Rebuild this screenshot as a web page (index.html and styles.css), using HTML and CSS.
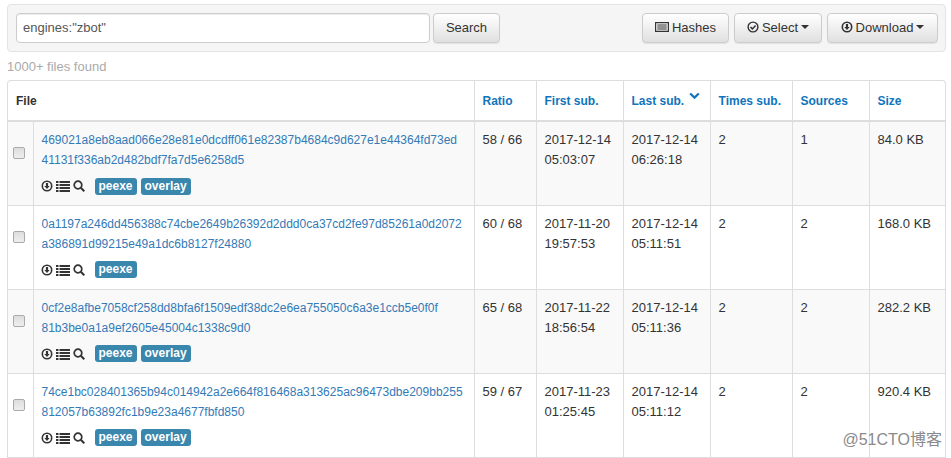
FILE: index.html
```html
<!DOCTYPE html>
<html lang="en">
<head>
<meta charset="utf-8">
<title>Search results</title>
<link rel="stylesheet" href="styles.css">
</head>
<body>
<svg class="defs" width="0" height="0" aria-hidden="true">
  <symbol id="i-down" viewBox="0 0 12 12"><circle cx="6" cy="6" r="4.7" fill="none" stroke="currentColor" stroke-width="1.6"/><path d="M4.9 2.9h2.2v3h1.6L6 9 3.3 5.900h1.600z" fill="currentColor"/></symbol>
  <symbol id="i-list" viewBox="0 0 14 12"><path d="M0 1h2.500v2H0zM3.500 1H14v2H3.500zM0 4h2.500v2H0zM3.500 4H14v2H3.500zM0 7h2.500v2H0zM3.500 7H14v2H3.500zM0 10h2.500v2H0zM3.500 10H14v2H3.500z" fill="currentColor"/></symbol>
  <symbol id="i-search" viewBox="0 0 12 12"><circle cx="5" cy="5" r="3.800" fill="none" stroke="currentColor" stroke-width="1.700"/><path d="M7.800 7.800L11.300 11.300" stroke="currentColor" stroke-width="2" fill="none"/></symbol>
  <symbol id="i-hash" viewBox="0 0 14 12"><path fill-rule="evenodd" d="M0 1h14v10H0zM1.200 2.200v7.600h11.600V2.200z" fill="currentColor"/><path d="M2.300 3.500h9.400v1H2.300zM2.300 5.500h9.400v1H2.300zM2.300 7.500h9.400v1H2.300z" fill="currentColor"/></symbol>
  <symbol id="i-check" viewBox="0 0 12 12"><circle cx="6" cy="6" r="4.900" fill="none" stroke="currentColor" stroke-width="1.400"/><path d="M3.500 6l1.900 1.900 3.200-3.300" fill="none" stroke="currentColor" stroke-width="1.500"/></symbol>
</svg>

<div class="page">
  <div class="well">
    <div class="search">
      <input class="query" type="text" value="engines:&quot;zbot&quot;">
      <button class="btn" type="button">Search</button>
    </div>
    <div class="actions">
      <button class="btn btn-hashes" type="button"><svg class="ico-h"><use href="#i-hash"/></svg>Hashes</button>
      <button class="btn btn-select" type="button"><svg class="ico"><use href="#i-check"/></svg>Select<span class="caret"></span></button>
      <button class="btn btn-download" type="button"><svg class="ico"><use href="#i-down"/></svg>Download<span class="caret"></span></button>
    </div>
  </div>

  <p class="found">1000+ files found</p>

  <div class="table-box">
    <table>
      <colgroup>
        <col class="c-check"><col class="c-hash"><col class="c-ratio"><col class="c-first"><col class="c-last"><col class="c-times"><col class="c-src"><col class="c-size">
      </colgroup>
      <thead>
        <tr>
          <th colspan="2" class="th-file">File</th>
          <th><a href="#">Ratio</a></th>
          <th><a href="#">First sub.</a></th>
          <th><a href="#">Last sub.</a><svg class="chev" viewBox="0 0 12 8"><path d="M1.300 1.300L6 5.800l4.700-4.500" fill="none" stroke="currentColor" stroke-width="2.400"/></svg></th>
          <th><a href="#">Times sub.</a></th>
          <th><a href="#">Sources</a></th>
          <th><a href="#">Size</a></th>
        </tr>
      </thead>
      <tbody>
        <tr class="odd">
          <td class="cell-check"><input class="box" type="checkbox"></td>
          <td class="cell-file">
            <a class="hash" href="#">469021a8eb8aad066e28e81e0dcdff061e82387b4684c9d627e1e44364fd73ed<br>41131f336ab2d482bdf7fa7d5e6258d5</a>
            <div class="tools"><svg class="t-down"><use href="#i-down"/></svg><svg class="t-list"><use href="#i-list"/></svg><svg class="t-search"><use href="#i-search"/></svg><span class="label">peexe</span><span class="label">overlay</span></div>
          </td>
          <td>58 / 66</td>
          <td>2017-12-14<br>05:03:07</td>
          <td>2017-12-14<br>06:26:18</td>
          <td>2</td>
          <td>1</td>
          <td>84.0 KB</td>
        </tr>
        <tr>
          <td class="cell-check"><input class="box" type="checkbox"></td>
          <td class="cell-file">
            <a class="hash" href="#">0a1197a246dd456388c74cbe2649b26392d2ddd0ca37cd2fe97d85261a0d2072<br>a386891d99215e49a1dc6b8127f24880</a>
            <div class="tools"><svg class="t-down"><use href="#i-down"/></svg><svg class="t-list"><use href="#i-list"/></svg><svg class="t-search"><use href="#i-search"/></svg><span class="label">peexe</span></div>
          </td>
          <td>60 / 68</td>
          <td>2017-11-20<br>19:57:53</td>
          <td>2017-12-14<br>05:11:51</td>
          <td>2</td>
          <td>2</td>
          <td>168.0 KB</td>
        </tr>
        <tr class="odd">
          <td class="cell-check"><input class="box" type="checkbox"></td>
          <td class="cell-file">
            <a class="hash" href="#">0cf2e8afbe7058cf258dd8bfa6f1509edf38dc2e6ea755050c6a3e1ccb5e0f0f<br>81b3be0a1a9ef2605e45004c1338c9d0</a>
            <div class="tools"><svg class="t-down"><use href="#i-down"/></svg><svg class="t-list"><use href="#i-list"/></svg><svg class="t-search"><use href="#i-search"/></svg><span class="label">peexe</span><span class="label">overlay</span></div>
          </td>
          <td>65 / 68</td>
          <td>2017-11-22<br>18:56:54</td>
          <td>2017-12-14<br>05:11:36</td>
          <td>2</td>
          <td>2</td>
          <td>282.2 KB</td>
        </tr>
        <tr>
          <td class="cell-check"><input class="box" type="checkbox"></td>
          <td class="cell-file">
            <a class="hash" href="#">74ce1bc028401365b94c014942a2e664f816468a313625ac96473dbe209bb255<br>812057b63892fc1b9e23a4677fbfd850</a>
            <div class="tools"><svg class="t-down"><use href="#i-down"/></svg><svg class="t-list"><use href="#i-list"/></svg><svg class="t-search"><use href="#i-search"/></svg><span class="label">peexe</span><span class="label">overlay</span></div>
          </td>
          <td>59 / 67</td>
          <td>2017-11-23<br>01:25:45</td>
          <td>2017-12-14<br>05:11:12</td>
          <td>2</td>
          <td>2</td>
          <td>920.4 KB</td>
        </tr>
      </tbody>
    </table>
  </div>
</div>
<div class="watermark">@51CTO博客</div>
</body>
</html>
```

FILE: styles.css
```css
* { box-sizing: border-box; }
html, body { margin: 0; padding: 0; height: 458px; overflow: hidden; background: #fff; }
body { font: 13px/20px "Liberation Sans", Arial, sans-serif; color: #333; position: relative; }
.defs { position: absolute; }
a { color: #337ab7; text-decoration: none; }

.page { padding: 4px 5px 0 7px; }

.well {
  height: 48px;
  display: flex;
  justify-content: space-between;
  align-items: flex-start;
  padding: 8px 7px 0 8px;
  background: #f5f5f5;
  border: 1px solid #e3e3e3;
  border-radius: 4px;
}
.search, .actions { display: flex; }
.actions { gap: 5px; }
.search { gap: 3px; }
.query {
  width: 414px;
  height: 30px;
  padding: 0 6px 2px;
  font: 13px "Liberation Sans", Arial, sans-serif;
  color: #555;
  background: #fff;
  border: 1px solid #ccc;
  border-radius: 4px;
  box-shadow: inset 0 1px 1px rgba(0,0,0,.075);
}
.btn {
  display: flex;
  align-items: center;
  justify-content: center;
  height: 30px;
  width: 67px;
  padding: 0 0 2px;
  font: 13px "Liberation Sans", Arial, sans-serif;
  color: #333;
  background: linear-gradient(#fff, #e0e0e0);
  border: 1px solid #ccc;
  border-radius: 4px;
  box-shadow: inset 0 1px 0 rgba(255,255,255,.15), 0 1px 1px rgba(0,0,0,.075);
}
.btn-hashes { width: 87px; }
.btn-select { width: 88px; }
.btn-download { width: 111px; }
.ico { width: 12px; height: 12px; margin-right: 3px; }
.ico-h { width: 14px; height: 12px; margin-right: 3px; }
.caret {
  margin-left: 3px;
  width: 0;
  height: 0;
  border-top: 4px solid #333;
  border-left: 4px solid transparent;
  border-right: 4px solid transparent;
}

.found { margin: 0; height: 28px; padding-top: 5px; line-height: 20px; color: #aaa; }

.table-box { border: 1px solid #ddd; border-radius: 4px 4px 0 0; border-bottom: 0; }
table { width: 100%; table-layout: fixed; border-collapse: collapse; }
.c-check { width: 25px; }
.c-hash { width: 441px; }
.c-ratio { width: 62px; }
.c-first { width: 87px; }
.c-last { width: 87px; }
.c-times { width: 82px; }
.c-src { width: 77px; }
th, td { border-left: 1px solid #ddd; padding: 8px 8px 0; vertical-align: top; text-align: left; line-height: 20px; }
th:first-child, td:first-child { border-left: 0; }
th { height: 40px; border-bottom: 2px solid #ddd; padding-top: 10px; font-size: 12px; font-weight: 700; color: #333; }
th a { color: #0f74bd; }
td { height: 84px; border-bottom: 1px solid #ddd; color: #333; }
.odd td { background: #f9f9f9; }
.chev { width: 11px; height: 8px; margin-left: 5px; vertical-align: 5px; color: #0f74bd; }

td.cell-check { padding: 25px 0 0 5px; }
.box {
  display: block;
  appearance: none;
  width: 12px;
  height: 12px;
  margin: 0;
  background: linear-gradient(#ddd, #eee);
  border: 1px solid #aaa;
  border-radius: 2px;
}
.hash { display: block; font-size: 12px; }
.tools { display: flex; align-items: center; height: 18px; margin-top: 7px; color: #333; }
.t-down { width: 12px; height: 12px; margin-right: 3px; margin-left: -1px; }
.t-list { width: 14px; height: 12px; margin-right: 3px; }
.t-search { width: 12px; height: 12px; margin-right: 10px; }
.label {
  display: block;
  height: 17px;
  padding: 0 4px;
  margin-right: 4px;
  font-weight: 700;
  font-size: 12px;
  line-height: 16px;
  color: #fff;
  background: #3a87ad;
  border-radius: 3px;
}

.watermark {
  position: absolute;
  right: 9px;
  bottom: 8px;
  font: 16px/20px "Liberation Sans", "Noto Sans CJK SC", sans-serif;
  color: #8a8a8a;
}
```
